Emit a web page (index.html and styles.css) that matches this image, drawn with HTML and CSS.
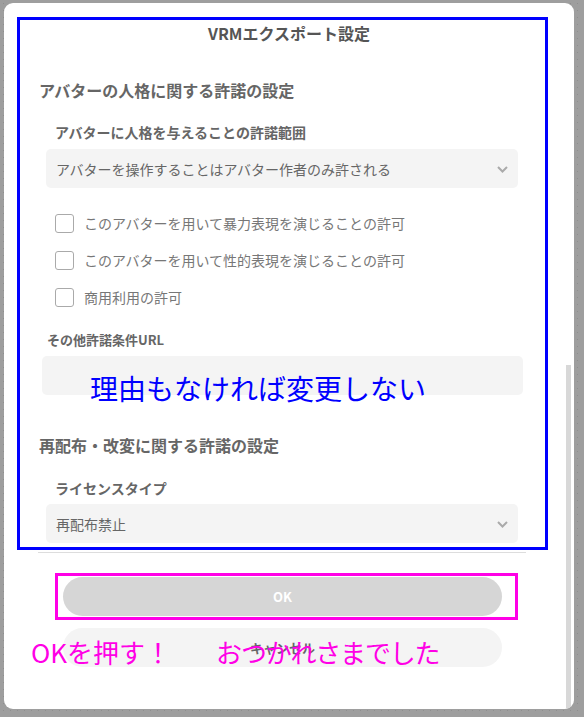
FILE: index.html
```html
<!DOCTYPE html>
<html lang="ja">
<head>
    <meta charset="UTF-8">
    <meta name="viewport" content="width=device-width, initial-scale=1.0">
    <title>VRMエクスポート設定</title>
    <link rel="stylesheet" href="styles.css">
</head>
<body>
    <div class="screen">
        <div class="modal">
            <div class="modal-body">
                <h1 class="title">VRMエクスポート設定</h1>

                <h2 class="section">アバターの人格に関する許諾の設定</h2>
                <div class="field-label">アバターに人格を与えることの許諾範囲</div>
                <div class="select">
                    <span>アバターを操作することはアバター作者のみ許される</span>
                    <svg class="chevron" width="11" height="7" viewBox="0 0 11 7"><path d="M1 1l4.5 4.5L10 1" fill="none" stroke="#aaa" stroke-width="2"/></svg>
                </div>

                <div class="checks">
                    <label class="check"><span class="box"></span>このアバターを用いて暴力表現を演じることの許可</label>
                    <label class="check"><span class="box"></span>このアバターを用いて性的表現を演じることの許可</label>
                    <label class="check"><span class="box"></span>商用利用の許可</label>
                </div>

                <div class="url-label">その他許諾条件URL</div>
                <div class="input"></div>

                <h2 class="section second">再配布・改変に関する許諾の設定</h2>
                <div class="field-label license">ライセンスタイプ</div>
                <div class="select license-select">
                    <span>再配布禁止</span>
                    <svg class="chevron" width="11" height="7" viewBox="0 0 11 7"><path d="M1 1l4.5 4.5L10 1" fill="none" stroke="#aaa" stroke-width="2"/></svg>
                </div>

                <div class="divider"></div>

                <div class="actions">
                    <button class="btn ok">OK</button>
                    <button class="btn cancel">キャンセル</button>
                </div>
            </div>
            <div class="scroll-track">
                <div class="scroll-thumb"></div>
            </div>
        </div>

        <!-- annotations drawn over the screenshot -->
        <div class="note-box blue"></div>
        <div class="note-text blue-text">理由もなければ変更しない</div>
        <div class="note-box pink"></div>
        <div class="note-text pink-text"><span>OKを押す！</span><span class="later">おつかれさまでした</span></div>
    </div>
</body>
</html>
```

FILE: styles.css
```css
* {
    margin: 0;
    padding: 0;
    box-sizing: border-box;
}

body {
    font-family: "Noto Sans CJK JP", "Noto Sans", sans-serif;
    background: #9e9e9e;
}

.screen {
    position: relative;
    width: 584px;
    height: 717px;
    padding: 3px 10px 8px 4px;
    background-color: #9e9e9e;
    background-image: radial-gradient(#8e8e8e 0.7px, transparent 0.9px);
    background-size: 7px 7px;
}

.modal {
    display: flex;
    height: 706px;
    background: white;
    border-radius: 9px;
    overflow: hidden;
}

.modal-body {
    flex: 1;
    display: flex;
    flex-direction: column;
    padding-top: 20px;
    color: #666;
}

.title {
    font-size: 16px;
    font-weight: 700;
    line-height: 20px;
    text-align: center;
    padding-left: 8px;
    color: #555;
}

.section {
    margin-top: 36px;
    padding-left: 35px;
    font-size: 16px;
    font-weight: 700;
    line-height: 22px;
    color: #666;
}

.section.second {
    margin-top: 39px;
}

.field-label {
    margin-top: 21px;
    padding-left: 51px;
    font-size: 14px;
    font-weight: 700;
    line-height: 20px;
}

.field-label.license {
    margin-top: 22px;
}

.select {
    display: flex;
    justify-content: space-between;
    align-items: center;
    height: 39px;
    margin: 7px 48px 0 42px;
    padding: 0 10px;
    background: #f4f4f4;
    border-radius: 5px;
    font-size: 14px;
    color: #666;
}

.select.license-select {
    margin-top: 6px;
}

.chevron {
    margin-top: 2px;
}

.checks {
    display: flex;
    flex-direction: column;
    gap: 13px;
    margin-top: 23px;
    padding-left: 51px;
}

.check {
    display: flex;
    align-items: center;
    gap: 10px;
    height: 24px;
    font-size: 14px;
    color: #777;
}

.box {
    width: 19px;
    height: 19px;
    border: 1.5px solid #aaa;
    border-radius: 3px;
}

.url-label {
    margin-top: 23px;
    padding-left: 43px;
    font-size: 13px;
    font-weight: 700;
    line-height: 16px;
}

.input {
    height: 39px;
    margin: 8px 43px 0 38px;
    background: #f4f4f4;
    border-radius: 5px;
}

.divider {
    height: 1px;
    margin: 9px 40px 0 34px;
    background: #ddd;
}

.actions {
    display: flex;
    flex-direction: column;
    gap: 12px;
    margin-top: 24px;
    padding: 0 64px 0 59px;
}

.btn {
    height: 39px;
    border: none;
    border-radius: 20px;
    font-family: inherit;
    font-size: 13px;
    font-weight: 700;
}

.btn.ok {
    background: #d6d6d6;
    color: white;
}

.btn.cancel {
    background: #f4f4f4;
    color: #666;
}

.scroll-track {
    width: 5px;
    margin-right: 3px;
    padding: 362px 0 1px;
}

.scroll-thumb {
    height: 100%;
    background: #d8d8d8;
}

/* annotations */
.note-box {
    position: absolute;
    border: 3px solid;
}

.note-box.blue {
    left: 17px;
    top: 17px;
    width: 531px;
    height: 533px;
    border-color: #0000ff;
}

.note-box.pink {
    left: 55px;
    top: 573px;
    width: 463px;
    height: 47px;
    border-color: #ff00e6;
}

.note-text {
    position: absolute;
    font-family: "Noto Sans CJK JP", sans-serif;
    line-height: 36px;
    white-space: nowrap;
}

.blue-text {
    left: 90px;
    top: 370px;
    font-size: 28px;
    color: #0000ff;
}

.pink-text {
    left: 31px;
    top: 634px;
    font-size: 26px;
    color: #ff00e6;
}

.pink-text .later {
    margin-left: 45px;
    letter-spacing: -1.2px;
}
```
